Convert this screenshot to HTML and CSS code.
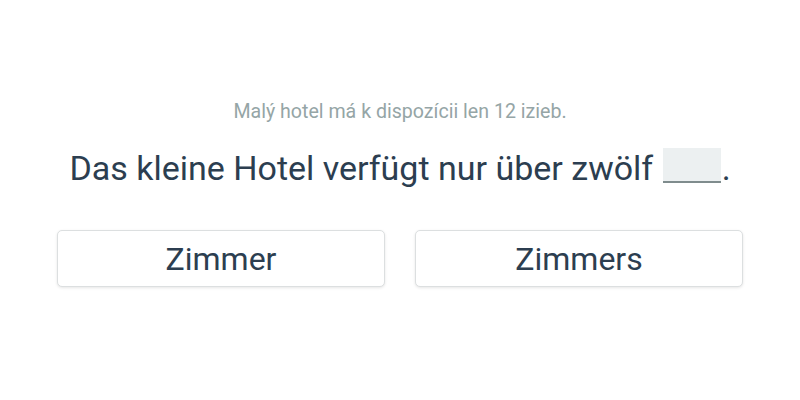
FILE: index.html
```html
<!DOCTYPE html>
<html>
<head>
<meta charset="utf-8">
<link rel="stylesheet" href="styles.css">
</head>
<body>
<main class="quiz">
  <p class="hint">Malý hotel má k dispozícii len 12 izieb.</p>
  <p class="sentence">Das kleine Hotel verfügt nur über zwölf <span class="blank"></span>.</p>
  <div class="options">
    <button class="option">Zimmer</button>
    <button class="option">Zimmers</button>
  </div>
</main>
</body>
</html>
```
FILE: styles.css
```css
html, body {
  margin: 0;
  padding: 0;
  background: #ffffff;
}
body {
  font-family: Roboto, "Noto Sans", sans-serif;
  width: 800px;
  height: 400px;
}
.quiz {
  display: flex;
  flex-direction: column;
  align-items: center;
  padding-top: 100px;
}
.hint {
  margin: 0;
  font-size: 19.6px;
  line-height: 24px;
  color: #95a5a6;
}
.sentence {
  margin: 24px 0 0;
  font-size: 34px;
  line-height: 40px;
  color: #2c3e50;
}
.blank {
  display: inline-block;
  width: 58px;
  height: 33px;
  background: #ecf0f1;
  border-bottom: 2px solid #7f8c8d;
  vertical-align: -3px;
  margin-left: 1px;
  margin-right: 1px;
}
.options {
  display: flex;
  gap: 30px;
  margin-top: 42px;
}
.option {
  width: 328px;
  height: 57px;
  background: #ffffff;
  border: 1px solid #dcdfe0;
  border-radius: 5px;
  box-shadow: 0 1px 3px rgba(0,0,0,0.1);
  font-family: Roboto, "Noto Sans", sans-serif;
  font-size: 32px;
  color: #2c3e50;
  padding: 0;
}
```
